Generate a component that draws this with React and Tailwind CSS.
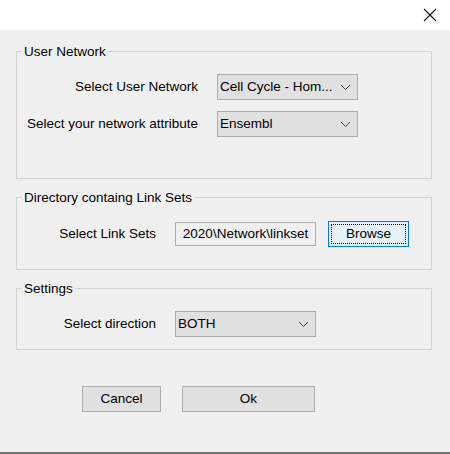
import React from "react";

const Chevron = () => (
  <svg width="11" height="7" viewBox="0 0 11 7" className="shrink-0">
    <path d="M1 1l4.5 4.5L10 1" fill="none" stroke="#444" strokeWidth="1" />
  </svg>
);

function Combo({ value, className = "" }) {
  return (
    <div
      className={`flex h-[26px] items-center justify-between border border-[#adadad] bg-[#e1e1e1] pl-[2px] pr-[6px] ${className}`}
    >
      <span className="truncate">{value}</span>
      <Chevron />
    </div>
  );
}

function Group({ title, className = "", children }) {
  return (
    <fieldset className={`mx-[16px] mr-[18px] border border-[#d5d5d5] ${className}`}>
      <legend className="ml-[5px] px-[2px] leading-[15px]">{title}</legend>
      {children}
    </fieldset>
  );
}

export default function App() {
  return (
    <div
      className="flex h-[454px] w-[450px] flex-col bg-white text-[13.5px] text-black"
      style={{ fontFamily: "Tahoma, 'Liberation Sans', Arial, sans-serif" }}
    >
      <div className="flex h-[30px] shrink-0 items-center justify-end pr-[13px]">
        <svg width="14" height="14" viewBox="0 0 14 14">
          <path d="M1 1l12 12M13 1L1 13" stroke="#111" strokeWidth="1.1" />
        </svg>
      </div>
      <div className="flex flex-1 flex-col border-b-2 border-[#6f6f6f] bg-[#f0f0f0] pt-[14px]">
        <Group title="User Network" className="h-[135px]">
          <div className="mt-[15px] flex items-center">
            <div className="w-[181px] text-right">Select User Network</div>
            <Combo value="Cell Cycle - Hom..." className="ml-[19px] w-[141px]" />
          </div>
          <div className="mt-[11px] flex items-center">
            <div className="w-[181px] text-right">Select your network attribute</div>
            <Combo value="Ensembl" className="ml-[19px] w-[141px]" />
          </div>
        </Group>
        <Group title="Directory containg Link Sets" className="mt-[11px] h-[80px]">
          <div className="mt-[16px] flex items-center">
            <div className="w-[139px] text-right">Select Link Sets</div>
            <div className="ml-[19px] flex h-[24px] w-[141px] items-center justify-center overflow-hidden whitespace-nowrap border border-[#adadad] bg-[#f0f0f0]">
              2020\Network\linkset
            </div>
            <button className="ml-[12px] h-[26px] w-[81px] border border-[#0078d7] bg-[#e5f1fb] p-[2px]">
              <div className="flex h-full w-full items-center justify-center border border-dotted border-black">
                Browse
              </div>
            </button>
          </div>
        </Group>
        <Group title="Settings" className="mt-[11px] h-[69px]">
          <div className="mt-[15px] flex items-center">
            <div className="w-[139px] text-right">Select direction</div>
            <Combo value="BOTH" className="ml-[19px] w-[141px]" />
          </div>
        </Group>
        <div className="mt-[36px] flex">
          <button className="ml-[82px] h-[26px] w-[79px] border border-[#adadad] bg-[#e1e1e1]">
            Cancel
          </button>
          <button className="ml-[21px] h-[26px] w-[133px] border border-[#adadad] bg-[#e1e1e1]">
            Ok
          </button>
        </div>
      </div>
    </div>
  );
}
